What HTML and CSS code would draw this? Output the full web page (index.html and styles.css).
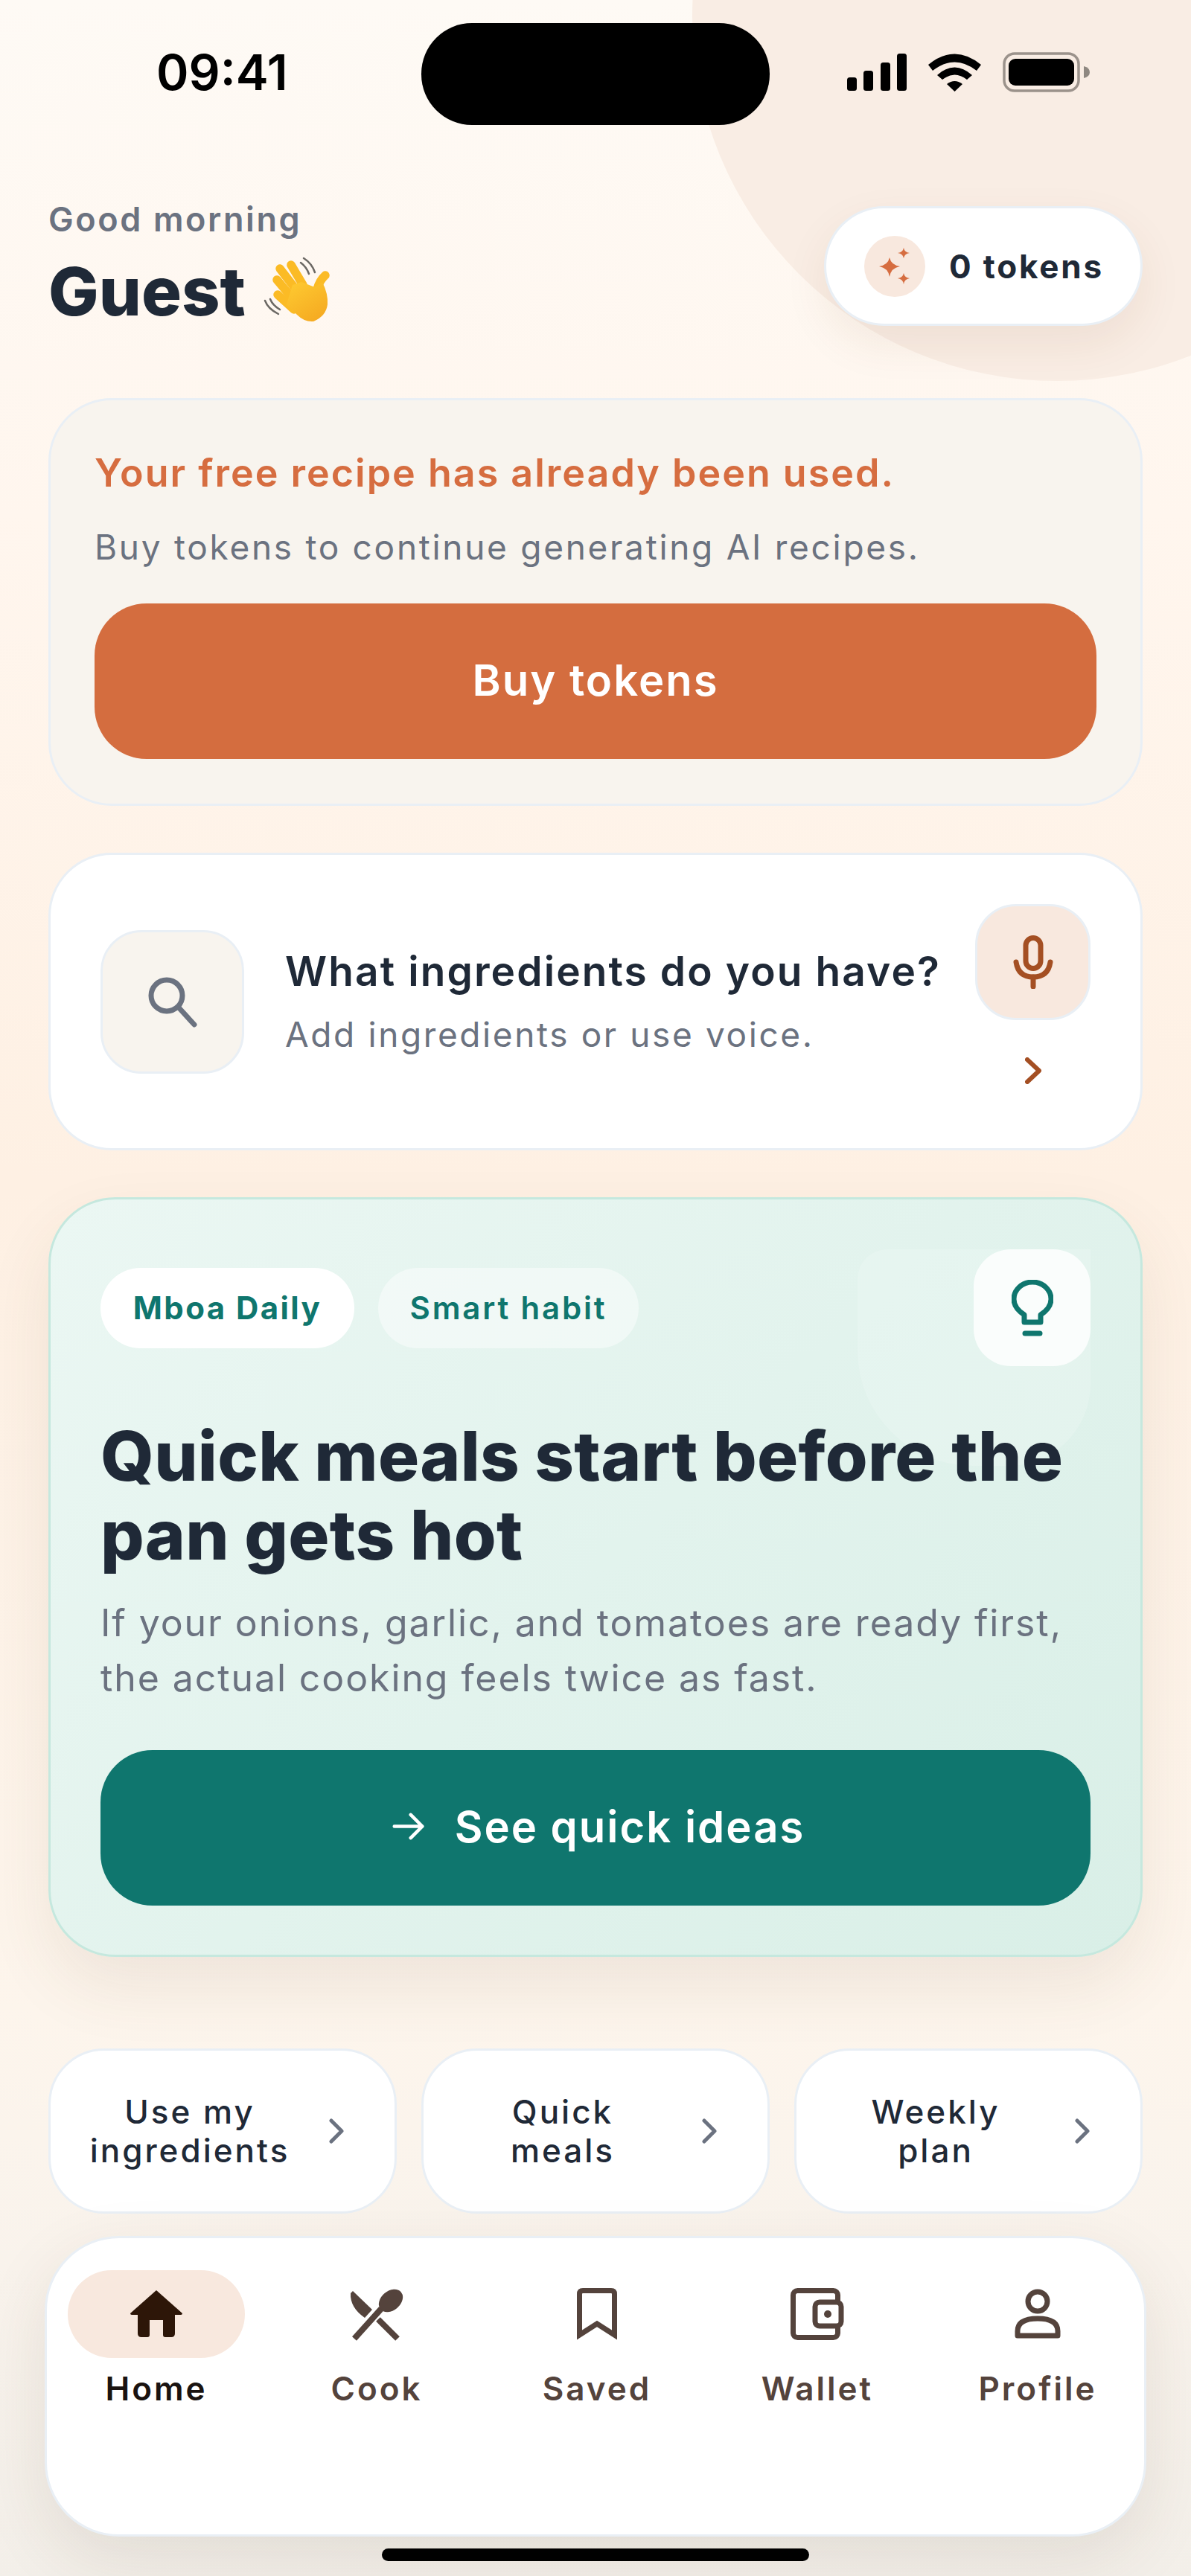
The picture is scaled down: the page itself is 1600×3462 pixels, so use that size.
FILE: index.html
```html
<!DOCTYPE html>
<html lang="en">
<head>
  <meta charset="UTF-8">
  <meta name="viewport" content="width=device-width, initial-scale=1.0">
  <title>Mboa Kitchen</title>
  <link rel="stylesheet" href="styles.css">
</head>
<body>
  <div class="screen">
    <div class="blob"></div>

    <div class="status">
      <span class="time">09:41</span>
      <div class="island"></div>
      <div class="status-icons">
        <svg width="80" height="50" viewBox="0 0 80 50">
          <rect x="0" y="32" width="13" height="18" rx="3.5"/>
          <rect x="22" y="23" width="13" height="27" rx="3.5"/>
          <rect x="45" y="12" width="13" height="38" rx="3.5"/>
          <rect x="67" y="0" width="13" height="50" rx="3.5"/>
        </svg>
        <svg width="71" height="52" viewBox="0 0 71 52">
          <path d="M0 16 Q35.5 -13 71 16 L65 24 Q35.5 1 6 24Z"/>
          <path d="M12 30 Q35.5 9 59 30 L52 36 Q35.5 23 19 36Z"/>
          <path d="M25 42 Q35.5 34 46 42 L35.5 52Z"/>
        </svg>
        <svg width="117" height="54" viewBox="0 0 117 54">
          <rect x="2" y="2" width="100" height="50" rx="14" fill="none" stroke="#9b928b" stroke-width="3.5"/>
          <rect x="8" y="9" width="88" height="36" rx="9"/>
          <path d="M109 19 Q117 21 117 27 Q117 33 109 35Z" fill="#8f8881"/>
        </svg>
      </div>
    </div>

    <div class="content">
      <header class="header">
        <div class="greeting">
          <p class="hello">Good morning</p>
          <h1 class="guest">Guest
            <svg class="wave" width="120" height="105" viewBox="0 0 120 105">
              <defs>
                <linearGradient id="palm" x1="0.2" y1="0.1" x2="0.8" y2="1">
                  <stop offset="0" stop-color="#fdc62f"/>
                  <stop offset="1" stop-color="#f5a921"/>
                </linearGradient>
              </defs>
              <g fill="none" stroke="#6b6864" stroke-width="2.500" stroke-linecap="round">
                <path d="M67 8 Q78 15 82 27"/>
                <path d="M63 14 Q71 20 74 29"/>
                <path d="M15 65 Q19 76 33 83"/>
                <path d="M22 63 Q25 71 35 77"/>
              </g>
              <g fill="none" stroke="#fbbb25" stroke-width="11.500" stroke-linecap="round">
                <path d="M50 17 L66 44"/>
                <path d="M35 22 L55 48"/>
                <path d="M31 37 L52 62"/>
                <path d="M32 57 L54 77"/>
                <path d="M96 31 Q88 38 85 50"/>
              </g>
              <path d="M52 44 L64 40 L82 47 L92 40 Q100 56 99 70 Q97 86 80 93 Q68 94 58 84 L44 70Z" fill="url(#palm)"/>
            </svg>
          </h1>
        </div>
        <div class="token-pill">
          <span class="token-icon">
            <svg width="42" height="50" viewBox="0 0 42 50" fill="#d66d40">
              <path d="M14 13 Q16 23 28 25 Q16 27 14 39 Q12 27 0 25 Q12 23 14 13Z"/>
              <path d="M33 0 Q34 6 41 7 Q34 8 33 14 Q32 8 25 7 Q32 6 33 0Z"/>
              <path d="M33 34 Q34 40 41 41 Q34 42 33 49 Q32 42 25 41 Q32 40 33 34Z"/>
            </svg>
          </span>
          <span class="token-text">0 tokens</span>
        </div>
      </header>

      <section class="card alert">
        <p class="alert-title">Your free recipe has already been used.</p>
        <p class="alert-sub">Buy tokens to continue generating AI recipes.</p>
        <button class="btn btn-orange">Buy tokens</button>
      </section>

      <section class="card search">
        <div class="search-icon">
          <svg width="70" height="70" viewBox="0 0 70 70" fill="none" stroke="#6b7280" stroke-width="7" stroke-linecap="round">
            <circle cx="27" cy="27" r="21"/>
            <path d="M43 43 L64 66"/>
          </svg>
        </div>
        <div class="search-text">
          <p class="search-title">What ingredients do you have?</p>
          <p class="search-sub">Add ingredients or use voice.</p>
        </div>
        <div class="search-side">
          <div class="mic">
            <svg width="54" height="72" viewBox="0 0 54 72" fill="none" stroke="#a44f23" stroke-width="7" stroke-linecap="round">
              <rect x="17" y="3.500" width="20" height="41" rx="10"/>
              <path d="M4 36 Q7 56 27 56 Q47 56 50 36"/>
              <path d="M27 56 V69"/>
            </svg>
          </div>
          <svg class="side-chevron" width="22" height="36" viewBox="0 0 22 36" fill="none" stroke="#a44f23" stroke-width="6" stroke-linecap="round" stroke-linejoin="round">
            <path d="M3 3 L19 18 L3 33"/>
          </svg>
        </div>
      </section>

      <section class="card hero">
        <div class="hero-glow"></div>
        <div class="hero-top">
          <div class="chips">
            <span class="chip chip-white">Mboa Daily</span>
            <span class="chip chip-soft">Smart habit</span>
          </div>
          <div class="bulb">
            <svg width="56" height="76" viewBox="0 0 56 76" fill="none" stroke="#0f766e" stroke-width="7">
              <path d="M17 57 V47 Q3 38 3 26 A25 23 0 0 1 53 26 Q53 38 39 47 V57Z" stroke-linejoin="round"/>
              <path d="M18 72 H38" stroke-linecap="round"/>
            </svg>
          </div>
        </div>
        <h2 class="hero-title">Quick meals start before the pan gets hot</h2>
        <p class="hero-text">If your onions, garlic, and tomatoes are ready first, the actual cooking feels twice as fast.</p>
        <button class="btn btn-green">
          <svg width="44" height="37" viewBox="0 0 48 40" fill="none" stroke="#fff" stroke-width="5" stroke-linecap="round" stroke-linejoin="round">
            <path d="M3 20 H44 M27 3 L44 20 L27 37"/>
          </svg>
          See quick ideas
        </button>
      </section>

      <div class="quick">
        <a class="quick-item"><span>Use my<br>ingredients</span>
          <svg width="20" height="34" viewBox="0 0 20 34" fill="none" stroke="#6b7280" stroke-width="5" stroke-linecap="round" stroke-linejoin="round"><path d="M3 3 L17 17 L3 31"/></svg>
        </a>
        <a class="quick-item"><span>Quick<br>meals</span>
          <svg width="20" height="34" viewBox="0 0 20 34" fill="none" stroke="#6b7280" stroke-width="5" stroke-linecap="round" stroke-linejoin="round"><path d="M3 3 L17 17 L3 31"/></svg>
        </a>
        <a class="quick-item"><span>Weekly<br>plan</span>
          <svg width="20" height="34" viewBox="0 0 20 34" fill="none" stroke="#6b7280" stroke-width="5" stroke-linecap="round" stroke-linejoin="round"><path d="M3 3 L17 17 L3 31"/></svg>
        </a>
      </div>
    </div>

    <nav class="nav">
      <a class="nav-item active">
        <span class="nav-icon">
          <svg width="70" height="64" viewBox="0 0 70 64" fill="#2d1608">
            <path d="M35 0 L70 31 Q70 33 68 33 H60 V58 Q60 63 55 63 H47 Q44 63 44 60 V40 H26 V60 Q26 63 23 63 H15 Q10 63 10 58 V33 H2 Q0 33 0 31Z"/>
          </svg>
        </span>
        Home
      </a>
      <a class="nav-item">
        <span class="nav-icon">
          <svg width="100" height="90" viewBox="0 0 100 90" fill="#54433c">
            <path d="M18 14 L44 39 L34 50 Q14 36 15 17Z"/>
            <ellipse cx="69" cy="27" rx="18" ry="13" transform="rotate(-40 69 27)"/>
            <path d="M56 38 L20 78 M52 52 L78 78" fill="none" stroke="#54433c" stroke-width="8"/>
          </svg>
        </span>
        Cook
      </a>
      <a class="nav-item">
        <span class="nav-icon">
          <svg width="54" height="70" viewBox="0 0 54 70" fill="none" stroke="#54433c" stroke-width="7">
            <path d="M3.500 8 Q3.500 3.500 8 3.500 H46 Q50.500 3.500 50.500 8 V63 L27 48 L3.500 63Z"/>
          </svg>
        </span>
        Saved
      </a>
      <a class="nav-item">
        <span class="nav-icon">
          <svg width="72" height="70" viewBox="0 0 72 70" fill="none" stroke="#54433c" stroke-width="7">
            <rect x="3.500" y="3.500" width="60" height="63" rx="6"/>
            <rect x="33" y="19" width="35" height="32" rx="6" fill="#fff"/>
            <circle cx="50" cy="35" r="5" fill="#54433c" stroke="none"/>
          </svg>
        </span>
        Wallet
      </a>
      <a class="nav-item">
        <span class="nav-icon">
          <svg width="62" height="68" viewBox="0 0 62 68" fill="none" stroke="#54433c" stroke-width="7" stroke-linejoin="round">
            <circle cx="31" cy="17" r="13"/>
            <path d="M4 63 V57 Q4 40 31 40 Q58 40 58 57 V63Z"/>
          </svg>
        </span>
        Profile
      </a>
    </nav>
    <div class="home-bar"></div>
  </div>
</body>
</html>
```

FILE: styles.css
```css
* {
  box-sizing: border-box;
}
body {
  margin: 0;
  font-family: Inter, "Liberation Sans", sans-serif;
  color: #1f2937;
}
p, h1, h2 {
  margin: 0;
}
.screen {
  position: relative;
  width: 1600px;
  height: 3462px;
  overflow: hidden;
  background: linear-gradient(180deg, #fefaf5 0%, #fff6ee 20%, #fef0e3 46%, #fdf5ec 78%, #f9f3ec 88%, #f3efe9 100%);
}
.blob {
  position: absolute;
  left: 930px;
  top: -468px;
  width: 980px;
  height: 980px;
  border-radius: 50%;
  background: #f9ede4;
}

/* status bar */
.status {
  position: relative;
  display: flex;
  align-items: center;
  padding: 31px 0 0 210px;
  height: 168px;
}
.time {
  width: 176px;
  font-size: 66px;
  font-weight: 600;
  color: #000;
  text-align: center;
  white-space: nowrap;
  margin-right: 180px;
  margin-top: -6px;
}
.island {
  width: 468px;
  height: 137px;
  border-radius: 68px;
  background: #000;
  margin-right: 104px;
}
.status-icons {
  display: flex;
  align-items: center;
  gap: 29px;
  margin-top: -6px;
}

.content {
  position: relative;
  padding: 0 65px;
}

/* header */
.header {
  display: flex;
  justify-content: space-between;
  align-items: flex-start;
  margin-top: 101px;
  height: 174px;
}
.hello {
  font-size: 45px;
  line-height: 52px;
  font-weight: 600;
  letter-spacing: 2.6px;
  color: #6b7280;
}
.guest {
  display: flex;
  align-items: center;
  gap: 11px;
  margin-top: 18px;
  font-size: 90px;
  line-height: 104px;
  font-weight: 800;
  color: #1f2937;
}
.token-pill {
  display: flex;
  align-items: center;
  gap: 32px;
  width: 428px;
  height: 161px;
  margin-top: 8px;
  padding-left: 51px;
  background: #fff;
  border: 3px solid #e9eff5;
  border-radius: 81px;
  box-shadow: 0 24px 60px rgba(120, 70, 30, 0.08);
}
.token-icon {
  display: flex;
  align-items: center;
  justify-content: center;
  width: 82px;
  height: 82px;
  border-radius: 50%;
  background: #f8e8de;
}
.token-text {
  font-size: 44px;
  font-weight: 700;
  letter-spacing: 2.8px;
  white-space: nowrap;
}

/* cards */
.card {
  background: #fff;
  border: 3px solid #e9eff5;
  border-radius: 85px;
}
.alert {
  margin-top: 92px;
  height: 548px;
  padding: 68px 59px 0;
  background: #f8f4ee;
}
.alert-title {
  font-size: 52px;
  line-height: 60px;
  font-weight: 600;
  letter-spacing: 2px;
  color: #d66d40;
}
.alert-sub {
  margin-top: 39px;
  font-size: 46px;
  line-height: 60px;
  letter-spacing: 2.7px;
  color: #6b7280;
}
.btn {
  display: flex;
  align-items: center;
  justify-content: center;
  width: 100%;
  height: 209px;
  padding-bottom: 5px;
  border: none;
  border-radius: 70px;
  color: #fff;
  font-family: inherit;
  font-size: 58px;
  font-weight: 600;
  letter-spacing: 2px;
}
.btn-orange {
  margin-top: 46px;
  background: #d46d3f;
}
.btn-green {
  gap: 40px;
  margin-top: 60px;
  padding-left: 14px;
  background: #0f766e;
}

.search {
  display: flex;
  align-items: center;
  margin-top: 63px;
  height: 400px;
  padding: 0 67px;
}
.search-icon {
  display: flex;
  align-items: center;
  justify-content: center;
  flex: none;
  width: 193px;
  height: 193px;
  background: #f8f4ee;
  border: 3px solid #e9eff5;
  border-radius: 55px;
}
.search-text {
  flex: 1;
  margin-left: 55px;
  white-space: nowrap;
}
.search-title {
  font-size: 55px;
  line-height: 66px;
  font-weight: 600;
  letter-spacing: 2.1px;
  color: #1f2937;
}
.search-sub {
  margin-top: 22px;
  font-size: 46px;
  line-height: 60px;
  letter-spacing: 2.6px;
  color: #6b7280;
}
.search-side {
  display: flex;
  flex-direction: column;
  align-items: center;
  flex: none;
  width: 155px;
  padding-bottom: 20px;
}
.mic {
  display: flex;
  align-items: center;
  justify-content: center;
  width: 155px;
  height: 156px;
  background: #f8e8de;
  border: 3px solid #e9eff5;
  border-radius: 55px;
}
.side-chevron {
  margin-top: 50px;
}

/* daily tip */
.hero {
  position: relative;
  margin-top: 63px;
  height: 1021px;
  padding: 67px;
  background: linear-gradient(135deg, #ebf7f3 0%, #d9efe7 100%);
  border-color: #c5e8de;
  border-radius: 90px;
  box-shadow: 0 40px 90px rgba(90, 70, 40, 0.09);
}
.hero-glow {
  position: absolute;
  left: 1084px;
  top: 67px;
  width: 313px;
  height: 291px;
  border-radius: 40px 0 110px 155px;
  background: rgba(255, 255, 255, 0.16);
}
.hero-top {
  position: relative;
  display: flex;
  align-items: center;
  justify-content: space-between;
  height: 157px;
}
.chips {
  display: flex;
  gap: 32px;
}
.chip {
  display: flex;
  align-items: center;
  justify-content: center;
  height: 108px;
  border-radius: 54px;
  font-size: 42px;
  font-weight: 600;
  letter-spacing: 2.8px;
  color: #0f766e;
}
.chip-white {
  width: 341px;
  background: #fff;
  font-weight: 700;
  letter-spacing: 2.4px;
}
.chip-soft {
  width: 350px;
  background: rgba(255, 255, 255, 0.45);
}
.bulb {
  display: flex;
  align-items: center;
  justify-content: center;
  width: 157px;
  height: 157px;
  border-radius: 50px;
  background: rgba(255, 255, 255, 0.8);
}
.hero-title {
  position: relative;
  margin-top: 68px;
  font-size: 92px;
  line-height: 106px;
  font-weight: 800;
  letter-spacing: 0.25px;
  color: #1f2937;
}
.hero-text {
  margin-top: 28px;
  font-size: 50px;
  line-height: 74px;
  letter-spacing: 1.9px;
  color: #6b7280;
}

/* quick links */
.quick {
  display: grid;
  grid-template-columns: repeat(3, 1fr);
  gap: 33px;
  margin-top: 123px;
}
.quick-item {
  display: flex;
  align-items: center;
  height: 222px;
  padding: 0 68px 0 0;
  background: #fff;
  border: 3px solid #e9eff5;
  border-radius: 75px;
  font-size: 44px;
  line-height: 52px;
  font-weight: 500;
  letter-spacing: 3px;
  color: #1f2937;
}
.quick-item span {
  flex: 1;
  text-align: center;
}

/* bottom nav */
.nav {
  position: absolute;
  left: 60px;
  top: 3005px;
  display: grid;
  grid-template-columns: repeat(5, 296px);
  justify-content: center;
  width: 1480px;
  height: 404px;
  padding: 43px 0 0 4px;
  background: #fff;
  border: 3px solid #e9eff5;
  border-radius: 100px;
  box-shadow: 0 30px 90px rgba(70, 50, 30, 0.1);
}
.nav-item {
  display: flex;
  flex-direction: column;
  align-items: center;
  font-size: 44px;
  line-height: 52px;
  font-weight: 600;
  letter-spacing: 3px;
  color: #54433c;
}
.nav-icon {
  display: flex;
  align-items: center;
  justify-content: center;
  width: 238px;
  height: 118px;
  margin-bottom: 15px;
  border-radius: 59px;
}
.nav-item.active {
  color: #1a1310;
}
.nav-item.active .nav-icon {
  background: #f8e8de;
}
.home-bar {
  position: absolute;
  left: 513px;
  top: 3425px;
  width: 574px;
  height: 17px;
  border-radius: 9px;
  background: #000;
}
```
